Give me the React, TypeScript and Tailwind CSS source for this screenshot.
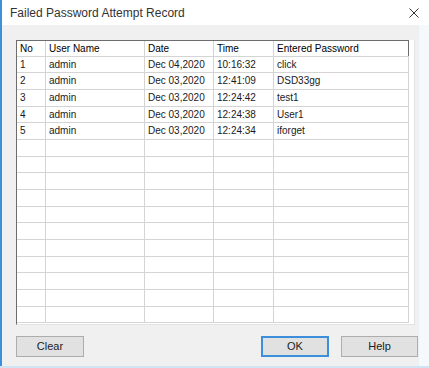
import React from "react";

interface AttemptRow {
  no: string;
  user: string;
  date: string;
  time: string;
  password: string;
}

const rows: AttemptRow[] = [
  { no: "1", user: "admin", date: "Dec 04,2020", time: "10:16:32", password: "click" },
  { no: "2", user: "admin", date: "Dec 03,2020", time: "12:41:09", password: "DSD33gg" },
  { no: "3", user: "admin", date: "Dec 03,2020", time: "12:24:42", password: "test1" },
  { no: "4", user: "admin", date: "Dec 03,2020", time: "12:24:38", password: "User1" },
  { no: "5", user: "admin", date: "Dec 03,2020", time: "12:24:34", password: "iforget" },
];

const TOTAL_ROWS = 16;

const cols = "grid grid-cols-[29px_99px_69px_60px_135px]";
const cell = "border-r border-[#d4d4d4] pl-[3px] leading-[15px] truncate";

const Button: React.FC<{ label: string; primary?: boolean; width: string }> = ({
  label,
  primary,
  width,
}) => (
  <button
    className={
      primary
        ? `${width} h-[21px] bg-[#e1e1e1] border-2 border-[#3d8fdc] text-[11px] text-[#222]`
        : `${width} h-[21px] bg-[#e1e1e1] border border-[#adadad] text-[11px] text-[#222]`
    }
  >
    {label}
  </button>
);

export default function App() {
  const filled = [...rows, ...Array.from({ length: TOTAL_ROWS - rows.length }, () => null)];

  return (
    <div className="w-[429px] h-[368px] flex flex-col bg-white font-['Liberation_Sans',Arial,sans-serif] overflow-hidden">
      {/* title bar */}
      <div className="h-[25px] flex items-center border-l-2 border-[#3c8fd9] bg-white">
        <span className="pl-[8px] text-[12px] text-[#333]">Failed Password Attempt Record</span>
        <div className="ml-auto mr-[10px] w-[10px] h-[10px]">
          <svg viewBox="0 0 10 10" className="w-[10px] h-[10px]">
            <path d="M0.5 0.5 L9.5 9.5 M9.5 0.5 L0.5 9.5" stroke="#333" strokeWidth="1" />
          </svg>
        </div>
      </div>

      <div className="flex flex-1">
        <div className="w-[418px] flex flex-col bg-[#f0f0f0] border-l-2 border-[#3c8fd9]">
          {/* list */}
          <div className="ml-[14px] mt-[15px] w-[399px] bg-white border-l border-[#6d6d6d] border-r border-r-[#e3e3e3] border-b border-b-[#e3e3e3]">
            <div className="flex">
              <div className={`${cols} h-[16.667px] border-t border-b border-t-[#6d6d6d] border-b-[#d4d4d4] text-[10px] text-black`}>
                <div className={cell}>No</div>
                <div className={cell}>User Name</div>
                <div className={cell}>Date</div>
                <div className={cell}>Time</div>
                <div className="border-r border-[#6d6d6d] pl-[3px] leading-[15px]">Entered Password</div>
              </div>
            </div>
            {filled.map((r, i) => (
              <div
                key={i}
                className={`${cols} h-[16.667px] border-b border-[#d4d4d4] w-[392px] text-[10px] text-[#1a1a1a]`}
              >
                <div className={cell}>{r?.no}</div>
                <div className={cell}>{r?.user}</div>
                <div className={cell}>{r?.date}</div>
                <div className={cell}>{r?.time}</div>
                <div className={cell}>{r?.password}</div>
              </div>
            ))}
            <div className="h-[1px]" />
          </div>

          {/* buttons */}
          <div className="flex mt-[11px] ml-[14px]">
            <Button label="Clear" width="w-[68px]" />
            <div className="ml-auto flex gap-[12px]">
              <Button label="OK" primary width="w-[68px]" />
              <Button label="Help" width="w-[77px]" />
            </div>
          </div>
          <div className="flex-1" />
        </div>
        <div className="flex-1 bg-[#f6f9fc] border-l border-[#e8eef3]" />
      </div>
      <div className="h-[2px] bg-[#cfe5f6]" />
    </div>
  );
}
